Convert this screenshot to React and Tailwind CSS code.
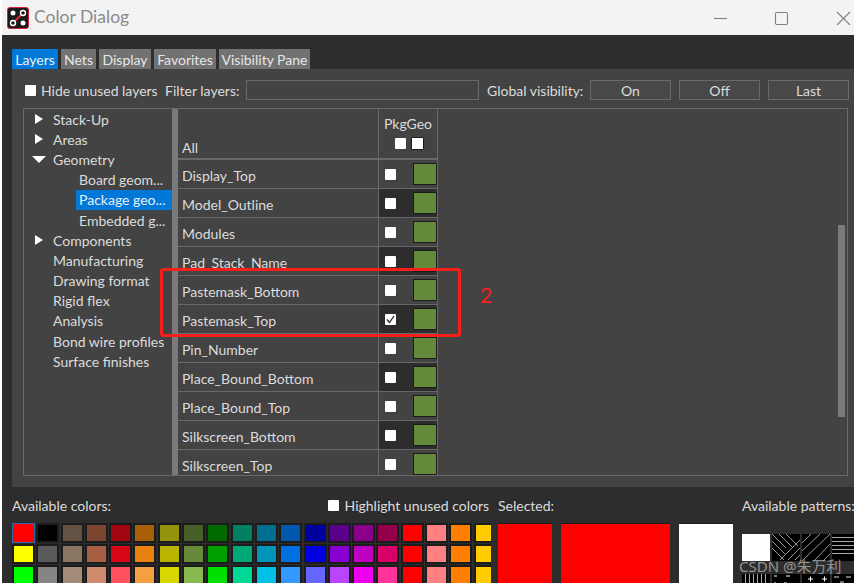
const FONT = 'font-["Lato","Noto_Sans",sans-serif]';

const TREE = [
  { label: 'Stack-Up', arrow: 'right' },
  { label: 'Areas', arrow: 'right' },
  { label: 'Geometry', arrow: 'down' },
  { label: 'Board geom...', sub: true },
  { label: 'Package geo...', sub: true, selected: true },
  { label: 'Embedded g...', sub: true },
  { label: 'Components', arrow: 'right' },
  { label: 'Manufacturing' },
  { label: 'Drawing format' },
  { label: 'Rigid flex' },
  { label: 'Analysis' },
  { label: 'Bond wire profiles' },
  { label: 'Surface finishes' },
];

const LAYERS = [
  { name: 'Display_Top' },
  { name: 'Model_Outline', dark: true },
  { name: 'Modules' },
  { name: 'Pad_Stack_Name', dark: true },
  { name: 'Pastemask_Bottom' },
  { name: 'Pastemask_Top', dark: true, checked: true },
  { name: 'Pin_Number' },
  { name: 'Place_Bound_Bottom', dark: true },
  { name: 'Place_Bound_Top' },
  { name: 'Silkscreen_Bottom', dark: true },
  { name: 'Silkscreen_Top' },
];

const COLORS = [
  ['#ff0000', '#000000', '#635244', '#7a4630', '#a00511', '#a86008', '#95920e', '#476029', '#006a00', '#008060', '#006f8f', '#0057ac', '#00009a', '#5a0089', '#8b008b', '#930049', '#ff0000', '#ff8080', '#ff8000', '#ffcc00'],
  ['#ffff00', '#5a5a5a', '#8a7462', '#a86044', '#d60617', '#e8820e', '#b8b400', '#668a3a', '#009f00', '#00a878', '#0095b8', '#006fdf', '#0000e0', '#8800d0', '#c000c0', '#d80068', '#ff0000', '#ff8080', '#ff8000', '#ffcc00'],
  ['#00ff00', '#858585', '#a38b78', '#cd8a6c', '#ff5060', '#f5a040', '#d8d800', '#88b850', '#00e000', '#00d898', '#00c0e8', '#3399ff', '#6666ff', '#bb44ff', '#ee00ee', '#ff3399', '#ff0000', '#ff8080', '#ff8000', '#ffcc00'],
];

function Checkbox({ checked, className = '' }) {
  return (
    <span className={`flex h-[11px] w-[11px] shrink-0 items-center justify-center rounded-[1px] bg-white ${className}`}>
      {checked && (
        <svg viewBox="0 0 11 11" className="h-[11px] w-[11px]">
          <path d="M2 5.5 L4.5 8.5 L9 2" fill="none" stroke="#222" strokeWidth="1.3" />
        </svg>
      )}
    </span>
  );
}

function Arrow({ dir }) {
  if (dir === 'down') {
    return <span className="h-0 w-0 border-x-[7px] border-t-[7px] border-x-transparent border-t-white" />;
  }
  return <span className="h-0 w-0 border-y-[5px] border-l-[8px] border-y-transparent border-l-white" />;
}

function Tab({ label, active, width }) {
  return (
    <div className={`flex h-5 items-center justify-center whitespace-nowrap ${width} ${active ? 'bg-[#0078d7] text-[#e8f0f8]' : 'bg-[#727272] text-[#e6e6e6]'}`}>
      {label}
    </div>
  );
}

function VisButton({ label }) {
  return (
    <div className="flex h-5 w-[81px] items-center justify-center border border-[#696969] bg-[#484848]">
      {label}
    </div>
  );
}

function LayerRow({ layer }) {
  return (
    <div className="flex h-[29px] shrink-0 border-b border-[#696969]">
      <div className="flex w-[201px] shrink-0 items-center whitespace-nowrap border-r border-[#696969] pl-[4px] pt-[2px]">{layer.name}</div>
      <div className={`flex w-[59px] shrink-0 items-center border-r border-[#696969] ${layer.dark ? 'bg-[#2d2d2d]' : ''}`}>
        <Checkbox checked={layer.checked} className="ml-[6px]" />
        <span className="ml-[17px] h-[22px] w-[24px] shrink-0 border border-[#1c1c1c] bg-[#628a3a]" />
      </div>
    </div>
  );
}

function Pattern({ children }) {
  return <div className="h-[27px] w-[28px] shrink-0 overflow-hidden bg-black">{children}</div>;
}

function PatternSvg({ d, color = '#999' }) {
  return (
    <svg viewBox="0 0 28 27" className="h-full w-full" stroke={color} fill="none">
      <path d={d} />
    </svg>
  );
}

export default function App() {
  return (
    <div className={`${FONT} relative h-[583px] w-[854px] overflow-hidden bg-white pl-[2px] text-[14px] text-[#dcdcdc]`}>
      {/* title bar */}
      <div className="flex h-[35px] items-center bg-[#f3f3f3]">
        <svg viewBox="0 0 22 22" className="ml-[5px] h-[22px] w-[22px]">
          <rect x="0.5" y="0.5" width="21" height="21" rx="2.5" fill="#1a1a1a" stroke="#d8203c" />
          <path d="M7 15 L15 7" stroke="#e02040" strokeWidth="2" />
          <circle cx="6" cy="6" r="2.5" fill="#fff" />
          <circle cx="16" cy="6" r="2.5" fill="none" stroke="#fff" strokeWidth="1.4" />
          <circle cx="6" cy="16" r="2.5" fill="none" stroke="#fff" strokeWidth="1.4" />
          <circle cx="16" cy="16" r="2.5" fill="#fff" />
        </svg>
        <span className="ml-[5px] text-[17.5px] text-[#8a8a8a]">Color Dialog</span>
        <svg viewBox="0 0 140 14" className="ml-auto mr-[1px] h-[14px] w-[140px]" fill="none" stroke="#808080" strokeWidth="1.1">
          <path d="M1 7.5 H14" />
          <rect x="62.5" y="1.5" width="12" height="12" rx="1.5" />
          <path d="M124 1 L137 14 M137 1 L124 14" />
        </svg>
      </div>

      <div className="h-[548px] bg-[#2d2d2d] pl-[10px] pt-[14px]">
        {/* tabs */}
        <div className="flex gap-[3px]">
          <Tab label="Layers" active width="w-[46px]" />
          <Tab label="Nets" width="w-[35px]" />
          <Tab label="Display" width="w-[52px]" />
          <Tab label="Favorites" width="w-[62px]" />
          <Tab label="Visibility Pane" width="w-[91px]" />
        </div>

        {/* layers panel */}
        <div className="h-[418px] bg-[#434343] pl-[11px]">
          <div className="flex h-[39px] items-center whitespace-nowrap pt-[3px]">
            <Checkbox className="ml-[2px]" />
            <span className="ml-[5px] w-[115px]">Hide unused layers</span>
            <span className="ml-[9px] w-[73px]">Filter layers:</span>
            <div className="ml-[8px] h-5 w-[233px] border border-[#696969]" />
            <span className="ml-[8px] w-[96px]">Global visibility:</span>
            <div className="ml-[7px] flex gap-[8px]">
              <VisButton label="On" />
              <VisButton label="Off" />
              <VisButton label="Last" />
            </div>
          </div>

          <div className="flex h-[368px] w-[825px] border border-[#696969]">
            {/* tree */}
            <div className="w-[148px] shrink-0 whitespace-nowrap">
              {TREE.map((item) => (
                <div key={item.label} className="flex h-[20.2px] items-center">
                  <span className="flex w-[29px] shrink-0 justify-center pl-[1px]">
                    {item.arrow && <Arrow dir={item.arrow} />}
                  </span>
                  {item.sub ? (
                    <span className={`ml-[23px] flex h-[20px] flex-1 items-center pl-[3px] ${item.selected ? 'bg-[#0078d7] text-[#e8f0f8]' : ''}`}>
                      {item.label}
                    </span>
                  ) : (
                    <span>{item.label}</span>
                  )}
                </div>
              ))}
            </div>
            <div className="w-[6px] shrink-0 bg-[#7a7a7a]" />

            {/* layer table */}
            <div className="flex w-[260px] shrink-0 flex-col overflow-hidden">
              <div className="flex h-[51px] shrink-0 border-b-2 border-[#696969]">
                <div className="flex w-[201px] shrink-0 items-end border-r border-[#696969] pl-[4px]">All</div>
                <div className="flex w-[59px] shrink-0 flex-col items-center border-r border-[#696969] pt-[4px]">
                  <span>PkgGeo</span>
                  <div className="mt-[3px] flex items-center gap-[5px] pl-[2px]">
                    <Checkbox />
                    <Checkbox className="h-[13px] w-[13px] border border-[#1c1c1c]" />
                  </div>
                </div>
              </div>
              {LAYERS.map((layer) => (
                <LayerRow key={layer.name} layer={layer} />
              ))}
            </div>

            {/* scrollbar */}
            <div className="ml-auto mr-[2px] mt-[116px] h-[192px] w-[7px] bg-[#7a7a7a]" />
          </div>
        </div>

        {/* colours */}
        <div className="flex pt-[8px]">
          <div className="w-[479px] shrink-0">
            <div className="flex h-[28px] items-start justify-between pr-[2px]">
              <span>Available colors:</span>
              <span className="flex items-center whitespace-nowrap">
                <Checkbox className="mr-[6px]" />
                Highlight unused colors
              </span>
            </div>
            <div className="flex w-[479px] flex-col gap-px overflow-hidden">
              {COLORS.map((row, r) => (
                <div key={r} className="flex gap-[1.3px]">
                  {row.map((color, c) => (
                    <div
                      key={c}
                      className={`h-[20px] w-[23px] shrink-0 ${r === 0 && c === 0 ? 'border border-[#2a6ca8]' : 'border-2 border-[#1c1c1c]'}`}
                      style={{ backgroundColor: color }}
                    />
                  ))}
                </div>
              ))}
            </div>
          </div>

          <div className="ml-[7px] w-[235px] shrink-0">
            <div className="h-[28px]">Selected:</div>
            <div className="flex h-[60px]">
              <div className="w-[54px] border-t border-[#1c1c1c] bg-[#ff0000]" />
              <div className="ml-[9px] w-[109px] border-t border-[#1c1c1c] bg-[#ff0000]" />
              <div className="ml-[9px] w-[54px] border-t border-[#1c1c1c] bg-white" />
            </div>
          </div>

          <div className="ml-[9px] shrink-0">
            <div className="h-[39px] whitespace-nowrap">Available patterns:</div>
            <div className="flex gap-[2px]">
              <Pattern>
                <div className="h-full w-full bg-white" />
              </Pattern>
              <Pattern>
                <PatternSvg d="M0 0 L14 14 M7 0 L20 13 M14 0 L26 12 M0 7 L14 21 M0 14 L12 26 M28 6 L8 26 M28 14 L16 26 M28 21 L23 26" />
              </Pattern>
              <Pattern>
                <PatternSvg d="M28 0 L0 27 M18 0 L0 17 M9 0 L0 9 M28 10 L12 27 M28 20 L21 27" />
              </Pattern>
              <Pattern>
                <PatternSvg color="#aaa" d="M0 3.5 H28 M0 7.5 H28 M0 11.5 H28 M0 15.5 H28 M0 19.5 H28" />
              </Pattern>
            </div>
            <div className="mt-[13px] flex gap-[2px]">
              <Pattern>
                <PatternSvg color="#aaa" d="M3.5 0 V27 M7.5 0 V27 M11.5 0 V27 M15.5 0 V27 M19.5 0 V27 M23.5 0 V27" />
              </Pattern>
              <Pattern>
                <PatternSvg color="#fff" d="M2 2 H5 M14 2 H18 M12 9 L15 9 M2 9 H4" />
              </Pattern>
              <Pattern>
                <PatternSvg color="#fff" d="M6 5 H11 M8.5 2.5 V7.5 M20 5 H25 M22.5 2.5 V7.5" />
              </Pattern>
              <Pattern>
                <PatternSvg color="#ddd" d="M2 3 H7 M14 3 H19 M8 8 H12 M22 8 H26" />
              </Pattern>
            </div>
          </div>
        </div>
      </div>

      {/* annotation */}
      <div className="absolute left-[160px] top-[268px] h-[69px] w-[301px] rounded-[3px] border-[3px] border-[#f5201a]" />
      <span className="absolute left-[480px] top-[279px] text-[21px] text-[#f5201a]">2</span>

      {/* watermark */}
      <span className='absolute left-[739px] top-[555px] font-["Noto_Sans","Noto_Sans_CJK_SC",sans-serif] text-[15px] text-[#b0b0b0]/80'>CSDN @朱万利</span>
    </div>
  );
}
